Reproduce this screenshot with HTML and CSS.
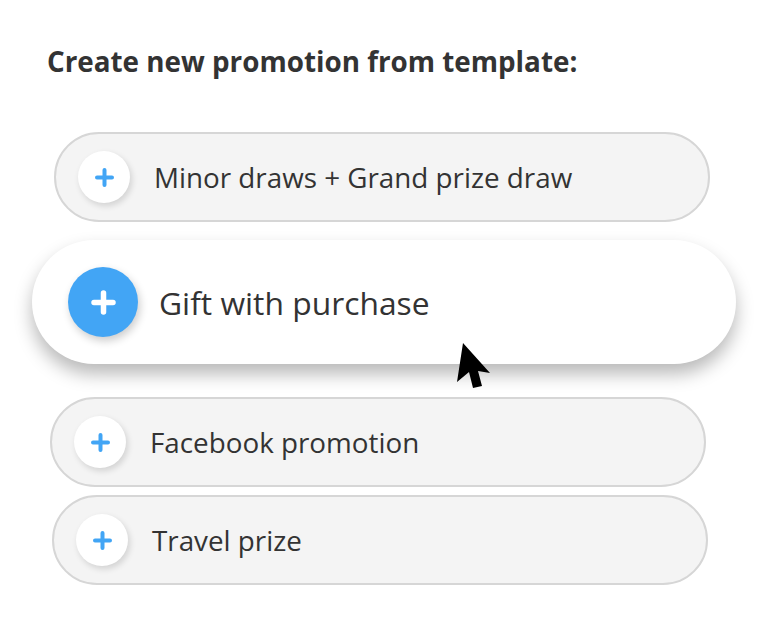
FILE: index.html
```html
<!DOCTYPE html>
<html lang="en">
<head>
    <meta charset="UTF-8">
    <meta name="viewport" content="width=device-width, initial-scale=1.0">
    <title>New promotion</title>
    <link rel="stylesheet" href="styles.css">
</head>
<body>

    <div class="page">
        <h1 class="title">Create new promotion from template:</h1>

        <ul class="template-list">
            <li class="template template-first">
                <span class="plus-btn"><svg width="19" height="19" viewBox="0 0 19 19"><path d="M9.5 2v15M2 9.5h15" stroke="#42a5f5" stroke-width="4" stroke-linecap="round"/></svg></span>
                <span class="template-name">Minor draws + Grand prize draw</span>
            </li>
            <li class="template template-active">
                <span class="plus-btn"><svg width="25" height="25" viewBox="0 0 25 25"><path d="M12.5 3v19M3 12.5h19" stroke="#fff" stroke-width="5.5" stroke-linecap="round"/></svg></span>
                <span class="template-name">Gift with purchase</span>
            </li>
            <li class="template template-third">
                <span class="plus-btn"><svg width="19" height="19" viewBox="0 0 19 19"><path d="M9.5 2v15M2 9.5h15" stroke="#42a5f5" stroke-width="4" stroke-linecap="round"/></svg></span>
                <span class="template-name">Facebook promotion</span>
            </li>
            <li class="template template-fourth">
                <span class="plus-btn"><svg width="19" height="19" viewBox="0 0 19 19"><path d="M9.5 2v15M2 9.5h15" stroke="#42a5f5" stroke-width="4" stroke-linecap="round"/></svg></span>
                <span class="template-name">Travel prize</span>
            </li>
        </ul>

        <!-- mouse pointer over the hovered template -->
        <svg class="cursor" width="36" height="48" viewBox="0 0 36 48">
            <polygon points="8,1 2,40 14,30 18,46 27,44 23,29 35,31" fill="#000"/>
        </svg>
    </div>

</body>
</html>
```

FILE: styles.css
```css
body {
    margin: 0;
    background-color: #fff;
    font-family: "Open Sans", "Noto Sans", Arial, sans-serif;
    color: #333;
}

.page {
    position: relative;
    width: 768px;
    height: 632px;
    padding: 42px 0 0 47px;
    box-sizing: border-box;
}

.title {
    margin: 0;
    font-size: 27.8px;
    font-weight: 700;
    line-height: 38px;
    color: #333;
}

.template-list {
    list-style-type: none;
    margin: 52px 0 0 0;
    padding: 0;
    display: flex;
    flex-direction: column;
    align-items: flex-start;
    gap: 8px;
}

.template {
    box-sizing: border-box;
    width: 656px;
    height: 90px;
    display: flex;
    align-items: center;
    padding-left: 22px;
    background-color: #f4f4f4;
    border: 2px solid #d6d6d6;
    border-radius: 45px;
}

.template-first {
    margin-left: 7px;
}

.template-third {
    margin-left: 3px;
}

.template-fourth {
    margin-left: 5px;
}

.plus-btn {
    width: 52px;
    height: 52px;
    flex-shrink: 0;
    border-radius: 50%;
    background-color: #fff;
    display: flex;
    align-items: center;
    justify-content: center;
    box-shadow: 2px 3px 6px rgba(0, 0, 0, 0.14);
}

.template-name {
    margin-left: 24px;
    font-size: 27.8px;
}

.template-active {
    margin: 10px 0 25px -15px;
    width: 704px;
    height: 124px;
    padding-left: 36px;
    background-color: #fff;
    border: none;
    border-radius: 62px;
    box-shadow: 0 10px 18px rgba(0, 0, 0, 0.28);
}

.template-active .plus-btn {
    width: 70px;
    height: 70px;
    background-color: #42a5f5;
    box-shadow: 2px 4px 8px rgba(0, 0, 0, 0.2);
}

.template-active .template-name {
    margin-left: 21px;
    font-size: 31.8px;
}

.cursor {
    position: absolute;
    left: 455px;
    top: 342px;
}
```
